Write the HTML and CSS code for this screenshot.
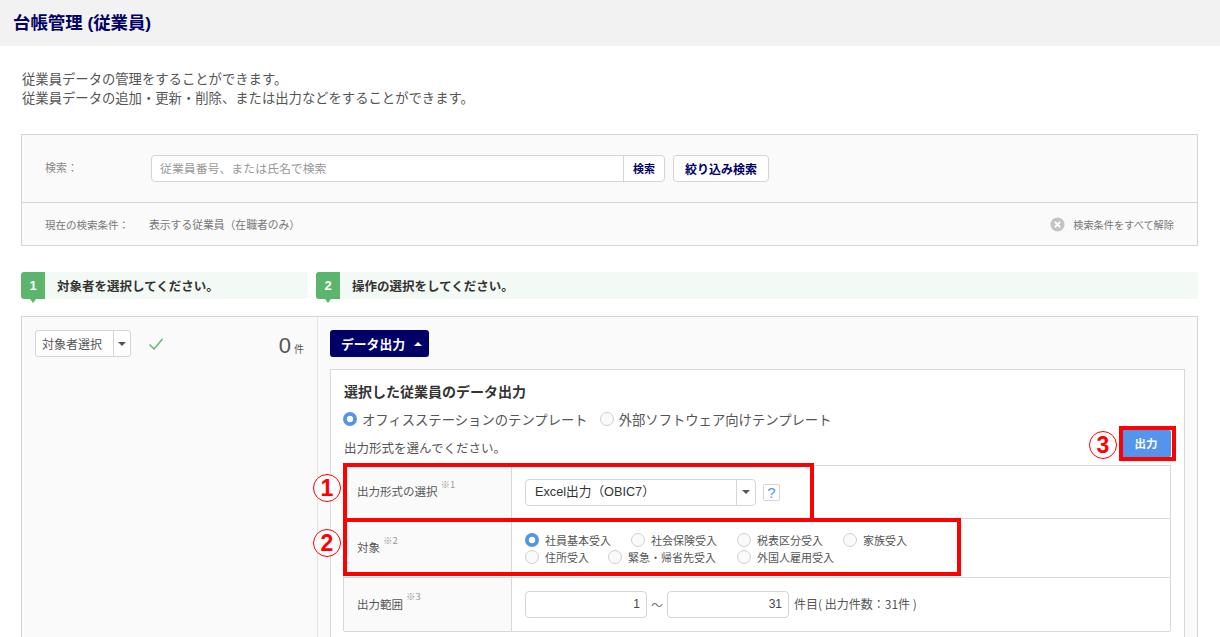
FILE: index.html
```html
<!DOCTYPE html>
<html lang="ja">
<head>
<meta charset="utf-8">
<title>台帳管理 (従業員)</title>
<link rel="stylesheet" href="styles.css">
</head>
<body>
<div class="page">
  <header class="head"><h1>台帳管理 (従業員)</h1></header>
  <div class="intro">
    <p>従業員データの管理をすることができます。</p>
    <p>従業員データの追加・更新・削除、または出力などをすることができます。</p>
  </div>
  <section class="search">
    <div class="search-top">
      <span class="search-label">検索：</span>
      <div class="search-input">
        <span class="placeholder">従業員番号、または氏名で検索</span>
        <span class="search-btn">検索</span>
      </div>
      <span class="filter-btn">絞り込み検索</span>
    </div>
    <div class="search-bottom">
      <span class="cond-label">現在の検索条件：</span>
      <span class="cond-value">表示する従業員（在職者のみ）</span>
      <span class="clear">
        <svg class="clear-icon" viewBox="0 0 16 16"><circle cx="8" cy="8" r="7.5" fill="#c4c4c4"/><path d="M5.2 5.2l5.6 5.6M10.8 5.2l-5.6 5.6" stroke="#fff" stroke-width="2"/></svg>
        検索条件をすべて解除
      </span>
    </div>
  </section>
  <div class="steps">
    <div class="step step-a"><span class="step-num">1</span><span class="step-text">対象者を選択してください。</span></div>
    <div class="step step-b"><span class="step-num">2</span><span class="step-text">操作の選択をしてください。</span></div>
  </div>
  <section class="panel">
    <aside class="side">
      <div class="picker"><span class="picker-text">対象者選択</span><span class="picker-arrow"><i class="tri"></i></span></div>
      <svg class="check" viewBox="0 0 16 14"><path d="M1.5 7.5l4.5 4.5 8.5-10" fill="none" stroke="#5cb56d" stroke-width="1.4"/></svg>
      <span class="count"><b>0</b><small>件</small></span>
    </aside>
    <div class="main">
      <span class="data-btn">データ出力<i class="tri-up"></i></span>
      <div class="card">
        <h2>選択した従業員のデータ出力</h2>
        <div class="tpl">
          <label class="radio-lg"><i class="radio on"></i>オフィスステーションのテンプレート</label>
          <label class="radio-lg"><i class="radio"></i>外部ソフトウェア向けテンプレート</label>
        </div>
        <div class="hint-row">
          <span class="hint">出力形式を選んでください。</span>
          <span class="out-btn">出力</span>
        </div>
        <div class="table">
          <div class="row row-1">
            <div class="th">出力形式の選択<sup>※1</sup></div>
            <div class="td">
              <div class="select"><span class="select-text">Excel出力（OBIC7）</span><span class="select-arrow"><i class="tri"></i></span></div>
              <span class="help">?</span>
            </div>
          </div>
          <div class="row row-2">
            <div class="th">対象<sup>※2</sup></div>
            <div class="td">
              <div class="opts">
                <label class="opt w1"><i class="radio on"></i>社員基本受入</label>
                <label class="opt w1"><i class="radio"></i>社会保険受入</label>
                <label class="opt w1"><i class="radio"></i>税表区分受入</label>
                <label class="opt"><i class="radio"></i>家族受入</label>
                <label class="opt w2"><i class="radio"></i>住所受入</label>
                <label class="opt w3"><i class="radio"></i>緊急・帰省先受入</label>
                <label class="opt"><i class="radio"></i>外国人雇用受入</label>
              </div>
            </div>
          </div>
          <div class="row row-3">
            <div class="th">出力範囲<sup>※3</sup></div>
            <div class="td">
              <span class="num">1</span><span class="tilde">～</span><span class="num">31</span>
              <span class="range-note">件目( 出力件数：31件 )</span>
            </div>
          </div>
        </div>
      </div>
    </div>
  </section>
</div>
<div class="mark box1"></div>
<div class="mark box2"></div>
<div class="mark box3"></div>
<span class="circ c1">1</span>
<span class="circ c2">2</span>
<span class="circ c3">3</span>
</body>
</html>
```
FILE: styles.css
```css
* { box-sizing: border-box; }
html, body { margin: 0; height: 637px; overflow: hidden; background: #fff; }
body { position: relative; font-family: "Noto Sans CJK JP", "Noto Sans", sans-serif; color: #555; font-size: 12px; }
p, h1, h2 { margin: 0; }
i { font-style: normal; display: block; }

.head { height: 46px; background: #f2f2f2; padding: 0 13px; display: flex; align-items: center; }
.head h1 { font-size: 17.4px; font-weight: 700; color: #000066; line-height: 45px; font-family: "Liberation Sans", "Noto Sans CJK JP", sans-serif; }

.intro { padding: 23px 22px 0; font-size: 13.33px; line-height: 19px; color: #555; height: 88px; }

.search { margin: 0 22px 0 21px; height: 112px; border: 1px solid #d5d5d5; background: #fafafa; }
.search-top { height: 68px; border-bottom: 1px solid #d5d5d5; display: flex; align-items: center; padding: 0 0 1px 23px; }
.search-label { width: 106px; color: #888; font-size: 11px; margin-top: -2px; }
.search-input { width: 514px; height: 27px; border: 1px solid #d5d5d5; border-radius: 4px; background: #fff; display: flex; align-items: center; justify-content: space-between; }
.placeholder { padding-left: 8px; color: #999; font-size: 11.9px; margin-top: -2px; }
.search-btn { width: 41px; height: 100%; border-left: 1px solid #d5d5d5; color: #000066; font-weight: 700; font-size: 11px; display: flex; align-items: center; justify-content: center; }
.filter-btn { margin-left: 8px; width: 96px; height: 27px; border: 1px solid #d5d5d5; border-radius: 4px; background: #fff; color: #000066; font-weight: 700; font-size: 12px; display: flex; align-items: center; justify-content: center; }
.search-bottom { height: 42px; display: flex; align-items: center; padding: 0 23px; font-size: 10.5px; color: #777; }
.cond-label { width: 104px; }
.cond-value { font-size: 10.8px; }
.clear { margin-left: auto; display: flex; align-items: center; gap: 8px; font-size: 10.2px; }
.clear-icon { width: 15px; height: 15px; }

.steps { display: flex; gap: 8px; margin: 26px 22px 17px 21px; }
.step { height: 27px; background: #f3f9f4; border-radius: 3px; display: flex; align-items: center; color: #333; font-weight: 700; font-size: 12.5px; }
.step-a { width: 287px; }
.step-b { flex: 1; }
.step-num { position: relative; width: 24px; height: 27px; background: #5cb56d; color: #fff; border-radius: 3px 0 0 3px; display: flex; align-items: center; justify-content: center; font-family: "Liberation Sans", sans-serif; font-size: 13px; margin-right: 12px; }
.step-num::after { content: ""; position: absolute; left: 9px; top: 27px; border: 3px solid transparent; border-top: 4px solid #5cb56d; border-bottom: 0; }

.panel { margin: 0 22px 0 21px; height: 330px; border: 1px solid #d5d5d5; background: #fafafa; display: flex; }
.side { width: 296px; flex: none; border-right: 1px solid #e2e2e2; padding: 13px 13px 0 13px; display: flex; align-items: flex-start; }
.picker { display: flex; height: 27px; width: 96px; border: 1px solid #d5d5d5; border-radius: 3px; background: #fff; align-items: center; }
.picker-text { width: 77px; flex: none; padding-left: 6px; font-size: 12px; color: #555; }
.picker-arrow { flex: 1; height: 100%; border-left: 1px solid #d5d5d5; display: flex; align-items: center; justify-content: center; }
.tri { border: 4px solid transparent; border-top: 4px solid #555; border-bottom: 0; }
.check { width: 16px; height: 14px; margin: 7px 0 0 17px; }
.count { margin-left: auto; display: flex; align-items: baseline; gap: 3px; color: #555; line-height: 32px; }
.count b { font-weight: 400; font-size: 22px; font-family: "Liberation Sans", sans-serif; }
.count small { font-size: 10px; }

.main { flex: 1; padding: 13px 12px 0 12px; }
.data-btn { display: flex; width: 99px; height: 27px; padding-left: 11px; background: #000066; border-radius: 3px; color: #fff; font-weight: 700; font-size: 12.8px; align-items: center; gap: 9px; }
.tri-up { border: 4px solid transparent; border-bottom: 4px solid #fff; border-top: 0; }
.card { margin-top: 12px; background: #fff; border: 1px solid #d9d9d9; padding: 11px 13px 0 12px; height: 290px; }
.card h2 { font-size: 14px; font-weight: 700; color: #333; line-height: 20px; margin-left: 1px; }
.tpl { display: flex; gap: 12px; margin-top: 6px; height: 24px; align-items: center; }
.radio-lg { display: flex; align-items: center; gap: 5px; font-size: 13.33px; color: #555; }
.radio { width: 14px; height: 14px; border-radius: 50%; border: 1px solid #d0d0d0; background: #fafafa; flex: none; }
.radio.on { border: 0; background: radial-gradient(circle, #fff 0 3px, #5594ec 3.6px); }
.hint-row { display: flex; justify-content: space-between; align-items: flex-start; height: 34px; font-size: 12.5px; color: #555; line-height: 34px; }
.hint { margin-left: 1px; }
.out-btn { width: 50px; height: 27px; background: #5594ec; color: #fff; font-weight: 700; font-size: 11.5px; line-height: 27px; border-radius: 2px; display: flex; align-items: center; justify-content: center; margin: -1px 0 0 0; }

.table { border: 1px solid #d9d9d9; border-bottom: 0; height: 166px; }
.row { display: flex; border-bottom: 1px solid #d9d9d9; }
.row-1 { height: 53px; }
.row-2 { height: 59px; }
.row-3 { height: 54px; }
.th { width: 168px; flex: none; background: #fafafa; border-right: 1px solid #d9d9d9; padding: 0 0 2px 13px; display: flex; align-items: center; font-size: 11.5px; color: #555; }
.th sup { font-size: 9.5px; color: #999; line-height: 1; align-self: center; margin: -13px 0 0 3px; }
.td { flex: 1; display: flex; align-items: center; padding-left: 13px; }
.select { width: 231px; height: 27px; border: 1px solid #d5d5d5; border-radius: 4px; display: flex; align-items: center; background: #fff; }
.select-text { flex: 1; padding-left: 9px; font-size: 12.7px; line-height: 20px; color: #333; font-family: "Liberation Sans", "Noto Sans CJK JP", sans-serif; }
.select-arrow { width: 19px; height: 100%; border-left: 1px solid #d5d5d5; display: flex; align-items: center; justify-content: center; }
.help { margin-left: 7px; width: 17px; height: 17px; border: 1px solid #d5d5d5; border-radius: 2px; color: #5594ec; font-family: "Liberation Sans", sans-serif; font-size: 15px; display: flex; align-items: center; justify-content: center; }
.opts { display: flex; flex-wrap: wrap; width: 420px; row-gap: 3px; }
.opt { display: flex; align-items: center; gap: 6px; font-size: 11px; line-height: 14px; color: #555; }
.w1 { width: 106px; }
.w2 { width: 83px; }
.w3 { width: 129px; }
.num { width: 122px; height: 27px; border: 1px solid #d5d5d5; border-radius: 4px; text-align: right; padding-right: 6px; line-height: 25px; font-family: "Liberation Sans", sans-serif; font-size: 12px; color: #444; }
.tilde { width: 20px; text-align: center; color: #777; font-size: 12px; }
.range-note { margin: -2px 0 0 5px; font-size: 12px; color: #555; }

.mark { position: absolute; border: 4px solid #ff0000; pointer-events: none; }
.box1 { left: 343px; top: 463px; width: 471px; height: 59px; }
.box2 { left: 343px; top: 518px; width: 618px; height: 58px; }
.box3 { left: 1119px; top: 426px; width: 57px; height: 35px; }
.circ { position: absolute; width: 28px; height: 28px; border: 1px solid #ff0000; border-radius: 50%; color: #ff0000; font-family: "Liberation Sans", sans-serif; font-weight: 700; font-size: 23px; line-height: 26px; text-align: center; background: #fff; }
.c1 { left: 313px; top: 474px; }
.c2 { left: 313px; top: 529px; }
.c3 { left: 1089px; top: 431px; }
```
